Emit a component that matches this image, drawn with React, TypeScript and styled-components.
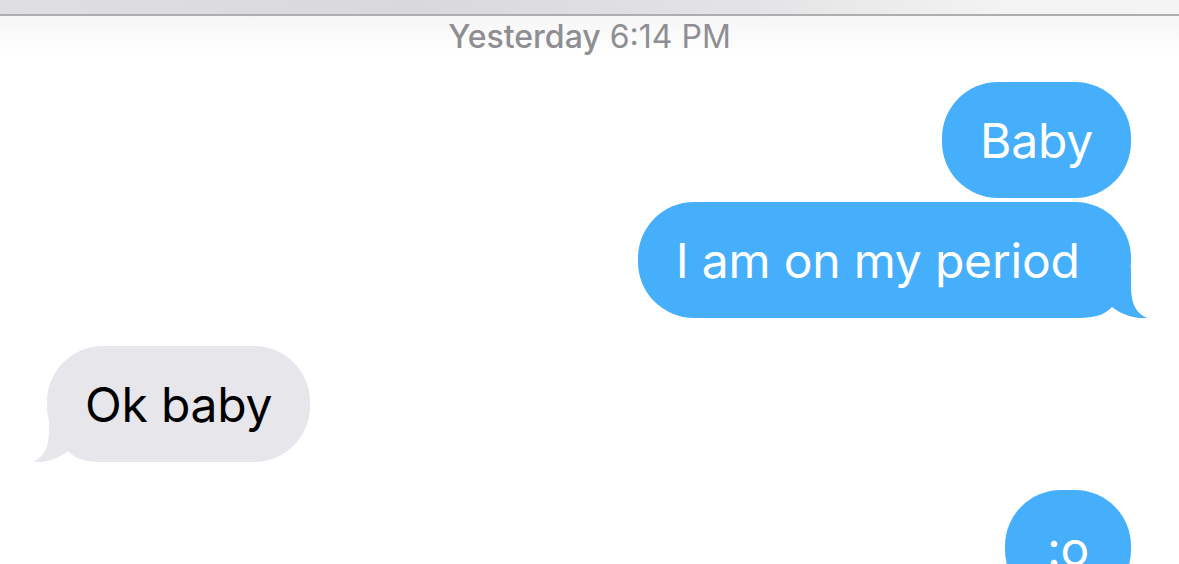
import React from "react";
import styled, { createGlobalStyle } from "styled-components";

const Global = createGlobalStyle`
  html, body { margin: 0; padding: 0; background: #ffffff; }
  body { width: 1179px; height: 564px; overflow: hidden; font-family: Inter, "Noto Sans", "Liberation Sans", sans-serif; }
`;

const Screen = styled.div`
  width: 1179px;
  height: 564px;
  overflow: hidden;
  display: flex;
  flex-direction: column;
  background: #ffffff;
`;

const TopBar = styled.div`
  height: 14px;
  flex: none;
  background: linear-gradient(90deg, #dfdee1 0%, #d9d8db 35%, #e4e4e6 65%, #f3f3f3 85%, #f4f4f4 100%);
  border-bottom: 2px solid #aeaeb0;
`;

const StampRow = styled.div`
  flex: none;
  height: 40px;
  display: flex;
  justify-content: center;
  align-items: center;
  font-size: 32px;
  color: #8e8e93;
  background: linear-gradient(180deg, rgba(240,240,240,0.6) 0%, rgba(255,255,255,0) 100%);
`;

const StampDay = styled.span`
  font-weight: 500;
  margin-right: 9px;
`;

const StampTime = styled.span`
  font-weight: 400;
`;

const Thread = styled.div`
  display: flex;
  flex-direction: column;
  padding: 26px 48px 0 47px;
`;

const Group = styled.div<{ $me?: boolean }>`
  display: flex;
  flex-direction: column;
  align-items: ${(p) => (p.$me ? "flex-end" : "flex-start")};
  gap: 4px;
  margin-bottom: 28px;
`;

const Bubble = styled.div<{ $me?: boolean }>`
  position: relative;
  box-sizing: border-box;
  height: 116px;
  min-width: 126px;
  padding: 2px 38px 0 38px;
  border-radius: 56px;
  display: flex;
  align-items: center;
  justify-content: center;
  font-size: 48px;
  line-height: 58px;
  letter-spacing: -0.2px;
  background: ${(p) => (p.$me ? "#45affc" : "#e6e6eb")};
  color: ${(p) => (p.$me ? "#ffffff" : "#000000")};
  white-space: pre;
`;

const Tail = styled.svg<{ $me?: boolean }>`
  position: absolute;
  bottom: 0;
  width: 70px;
  height: 50px;
  ${(p) => (p.$me ? "right: -16px;" : "left: -14px; transform: scaleX(-1);")}
  fill: ${(p) => (p.$me ? "#45affc" : "#e6e6eb")};
`;

const BubbleText = styled.span`
  position: relative;
  z-index: 1;
`;

function TailShape({ me }: { me?: boolean }) {
  return (
    <Tail $me={me} viewBox="0 0 70 50" aria-hidden="true">
      <path d="M0 0 L54 0 L54 18 C54 36 59 45 70 50 C58 51 45 47 35 39 C28 46 20 50 0 50 Z" />
    </Tail>
  );
}

type Msg = { text: string; tail?: boolean };

function MessageGroup({ me, items }: { me?: boolean; items: Msg[] }) {
  return (
    <Group $me={me}>
      {items.map((m, i) => (
        <Bubble key={i} $me={me}>
          {m.tail && <TailShape me={me} />}
          <BubbleText>{m.text}</BubbleText>
        </Bubble>
      ))}
    </Group>
  );
}

export default function App() {
  return (
    <>
      <Global />
      <Screen>
        <TopBar />
        <StampRow>
          <StampDay>Yesterday</StampDay>
          <StampTime>6:14 PM</StampTime>
        </StampRow>
        <Thread>
          <MessageGroup me items={[{ text: "Baby" }, { text: "I am on my period ", tail: true }]} />
          <MessageGroup items={[{ text: "Ok baby", tail: true }]} />
          <MessageGroup me items={[{ text: ":o" }]} />
        </Thread>
      </Screen>
    </>
  );
}
